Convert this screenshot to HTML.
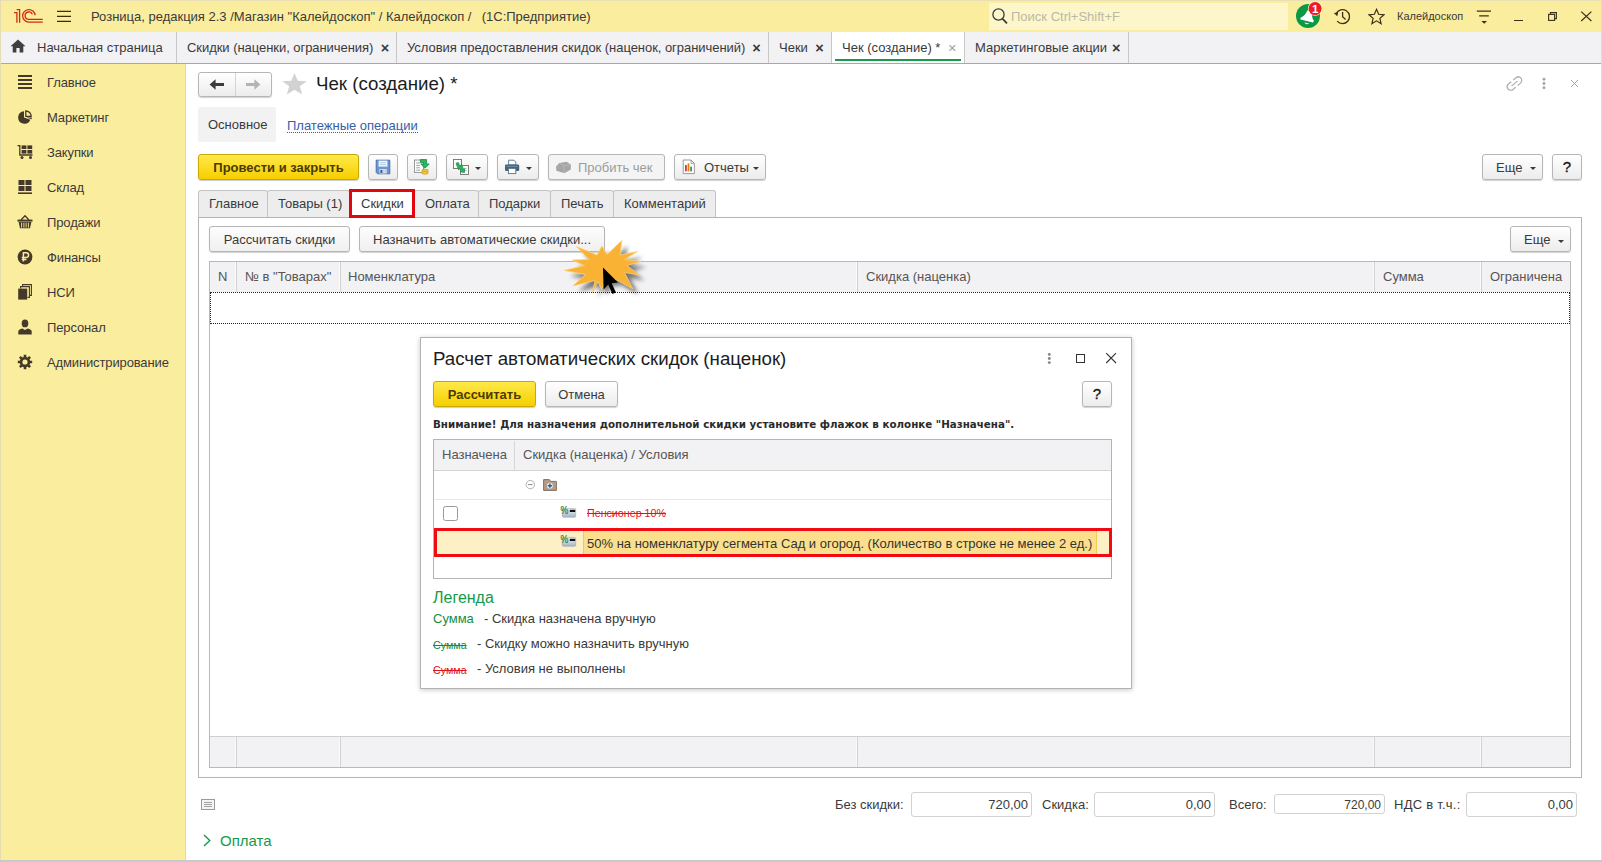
<!DOCTYPE html>
<html lang="ru">
<head>
<meta charset="utf-8">
<title>Чек (создание)</title>
<style>
*{box-sizing:border-box;margin:0;padding:0}
html,body{width:1602px;height:862px;overflow:hidden;background:#fff}
body{font-family:"Liberation Sans",sans-serif;font-size:13px;color:#3a3a3a;position:relative}
.abs{position:absolute}
.t{position:absolute;white-space:nowrap;line-height:16px}
#topbar{left:0;top:0;width:1602px;height:32px;background:#fbed9e}
#tabbar{left:0;top:32px;width:1602px;height:31px;background:#f2f1f4}
#tabline{left:0;top:63px;width:1602px;height:1px;background:#a8a8a8}
#sidebar{left:0;top:64px;width:186px;height:798px;background:#fbed9e}
.vsep{position:absolute;top:32px;width:1px;height:31px;background:#c8c8c8}
.btn{position:absolute;border:1px solid #b6b6b6;border-radius:3px;background:linear-gradient(#ffffff,#ececec);box-shadow:0 1px 1px rgba(0,0,0,.18)}
.ybtn{position:absolute;border:1px solid #c9a800;border-radius:3px;background:linear-gradient(#ffe94a,#f7cf00);box-shadow:0 1px 1px rgba(0,0,0,.2)}
.inp{position:absolute;border:1px solid #d2d2d2;border-radius:3px;background:#fff}
.side{position:absolute;left:47px;letter-spacing:-.13px;font-size:13px;color:#3a3a3a;white-space:nowrap;line-height:16px}
.t{font-size:13px}
.tx{font-size:14.5px;font-weight:bold;color:#3a3a3a;line-height:16px}
.dd{position:absolute;width:0;height:0;margin-top:1px;border-left:3.5px solid transparent;border-right:3.5px solid transparent;border-top:3.5px solid #3a3a3a}
.ftab{position:absolute;top:190px;height:28px;background:#ededed;border:1px solid #c4c4c4;border-bottom:none;border-radius:3px 3px 0 0}
.cs{position:absolute;top:262px;width:1px;height:30px;background:#d2d2d2;box-shadow:-1px 0 0 #fafafa}
.cs.b{top:737px}
.th{color:#555}
</style>
</head>
<body>
<!-- frame -->
<div class="abs" id="topbar"></div>
<div class="abs" id="tabbar"></div>
<div class="abs" id="tabline"></div>
<div class="abs" id="sidebar"></div>

<!-- TOPBAR -->
<svg class="abs" style="left:12px;top:8px" width="33" height="16" viewBox="0 0 33 16">
  <g fill="none" stroke="#cf2c12" stroke-width="1.3">
    <path d="M2 4.7 H4.9 V14.7"/>
    <path d="M4.6 1.7 H7.6 V14.7"/>
    <path d="M23.1 7.2 A6.25 6.25 0 1 0 16.9 14.05 H30.8"/>
    <path d="M20.3 6.4 A3.7 3.7 0 1 0 16.9 11.3 H30.8"/>
  </g>
</svg>
<svg class="abs" style="left:57px;top:10px" width="15" height="13" viewBox="0 0 15 13"><g stroke="#3a3000" stroke-width="1.3"><path d="M0 1.4H14M0 6.4H14M0 11.3H14"/></g></svg>
<div class="t" style="left:91px;top:9px;font-size:13px;color:#3a3a3a">Розница, редакция 2.3 /Магазин "Калейдоскоп" / Калейдоскоп /&nbsp; <span style="margin-left:3px">(1С:Предприятие)</span></div>
<div class="abs" style="left:989px;top:3px;width:299px;height:27px;background:#fdf6ca"></div>
<svg class="abs" style="left:991px;top:7px" width="18" height="18" viewBox="0 0 18 18"><circle cx="7.5" cy="7.5" r="5.6" fill="none" stroke="#3a3a3a" stroke-width="1.3"/><path d="M11.6 11.8L16 16.3" stroke="#3a3a3a" stroke-width="1.8"/></svg>
<div class="t" style="left:1011px;top:9px;font-size:13px;color:#b9b9a4">Поиск Ctrl+Shift+F</div>
<!-- bell -->
<svg class="abs" style="left:1294px;top:0px" width="30" height="30" viewBox="1294 0 30 30">
  <circle cx="1308" cy="16" r="12" fill="#0b9947"/>
  <path d="M1300.3 18 Q1305.6 15.6 1307.2 10.6 Q1311.6 11.2 1312 16 Q1312.4 19 1314 21 L1312.8 22.4 L1300.6 19.4Z" fill="#fff"/>
  <path d="M1304.4 22.4 L1309.3 23.6 Q1306.4 25.6 1304.4 22.4Z" fill="#e8fff0"/>
  <circle cx="1315.1" cy="8.6" r="7.2" fill="#fdf3c2"/>
  <circle cx="1315.1" cy="8.6" r="6.5" fill="#ee1c25"/>
  <text x="1315.2" y="12.8" font-family="Liberation Sans,Arial,sans-serif" font-size="11.5" font-weight="bold" fill="#fff" text-anchor="middle">1</text>
</svg>
<!-- history -->
<svg class="abs" style="left:1332px;top:6px" width="22" height="22" viewBox="1332 6 22 22"><path d="M1336.2 13.6 A7 7 0 1 1 1337.2 21.2" fill="none" stroke="#3a3018" stroke-width="1.3"/><path d="M1333.8 13 L1338.2 12.4 L1337.2 16.2Z" fill="#3a3018"/><path d="M1342.6 12V16.7L1345.6 19.4" fill="none" stroke="#3a3018" stroke-width="1.3"/></svg>
<!-- star -->
<svg class="abs" style="left:1368px;top:8px" width="17" height="17" viewBox="0 0 20 20"><path d="M10 1.6 L12.5 7.4 L18.8 8 L14 12.2 L15.4 18.4 L10 15.1 L4.6 18.4 L6 12.2 L1.2 8 L7.5 7.4Z" fill="none" stroke="#3a3018" stroke-width="1.4" stroke-linejoin="miter"/></svg>
<div class="t" style="left:1397px;top:8px;font-size:11px;color:#3a3a3a">Калейдоскоп</div>
<svg class="abs" style="left:1475px;top:10px" width="18" height="16" viewBox="0 0 18 16"><path d="M1.8 1.2H16M4.2 5.9H13.8" stroke="#3a3018" stroke-width="1.2"/><path d="M6.4 11 H12 L9.2 13.8Z" fill="#3a3018"/></svg>
<div class="abs" style="left:1514px;top:19.5px;width:9px;height:1.3px;background:#3a3018"></div>
<svg class="abs" style="left:1547px;top:11px" width="11" height="11" viewBox="0 0 11 11"><path d="M3.4 3.2V1.6H9.4V7.6H7.8" fill="none" stroke="#3a3018" stroke-width="1.1"/><rect x="1.6" y="3.4" width="6" height="6" fill="none" stroke="#3a3018" stroke-width="1.1"/></svg>
<svg class="abs" style="left:1580px;top:10px" width="13" height="13" viewBox="0 0 13 13"><path d="M1.2 1.6L11.4 11M11.4 1.6L1.2 11" stroke="#3a3018" stroke-width="1.2"/></svg>

<!-- TABBAR -->
<svg class="abs" style="left:10px;top:39px" width="16" height="14" viewBox="0 0 16 14"><path d="M8 0.5 L15.5 7.2 H13.3 V13.5 H9.6 V9 H6.4 V13.5 H2.7 V7.2 H0.5Z" fill="#3f3f3f"/></svg>
<div class="t" style="left:37px;top:40px">Начальная страница</div>
<div class="vsep" style="left:176px"></div>
<div class="t" style="left:187px;top:40px;letter-spacing:-.05px">Скидки (наценки, ограничения)</div>
<div class="t tx" style="left:375px;width:20px;text-align:center;top:40px">×</div>
<div class="vsep" style="left:396px"></div>
<div class="t" style="left:407px;top:40px;letter-spacing:-.05px">Условия предоставления скидок (наценок, ограничений)</div>
<div class="t tx" style="left:746.5px;width:20px;text-align:center;top:40px">×</div>
<div class="vsep" style="left:768px"></div>
<div class="t" style="left:779px;top:40px">Чеки</div>
<div class="t tx" style="left:809.4px;width:20px;text-align:center;top:40px">×</div>
<div class="vsep" style="left:831px"></div>
<div class="abs" style="left:832px;top:32px;width:132px;height:31px;background:#fff"></div>
<div class="abs" style="left:835px;top:59px;width:126px;height:2px;background:#159a4a"></div>
<div class="t" style="left:842px;top:40px">Чек (создание) *</div>
<div class="t tx" style="left:942.2px;width:20px;text-align:center;top:40px;color:#a0a0a0;font-weight:normal">×</div>
<div class="vsep" style="left:964px"></div>
<div class="t" style="left:975px;top:40px">Маркетинговые акции</div>
<div class="t tx" style="left:1106.3px;width:20px;text-align:center;top:40px">×</div>
<div class="vsep" style="left:1128px"></div>

<!-- SIDEBAR -->
<div class="side" style="top:75px">Главное</div>
<div class="side" style="top:110px">Маркетинг</div>
<div class="side" style="top:145px">Закупки</div>
<div class="side" style="top:180px">Склад</div>
<div class="side" style="top:215px">Продажи</div>
<div class="side" style="top:250px">Финансы</div>
<div class="side" style="top:285px">НСИ</div>
<div class="side" style="top:320px">Персонал</div>
<div class="side" style="top:355px">Администрирование</div>
<!-- sidebar icons -->
<svg class="abs" style="left:18px;top:74px" width="14" height="16" viewBox="0 0 14 16"><path d="M0 2H14M0 6H14M0 10H14M0 14H14" stroke="#45392a" stroke-width="2"/></svg>
<svg class="abs" style="left:17px;top:109px" width="16" height="16" viewBox="0 0 16 16"><path d="M7 2.2 A6.3 6.3 0 1 0 13.3 10.8 L7 8.5Z" fill="#45392a"/><path d="M8.8 2 A5.4 5.4 0 0 1 14.2 7.4 H8.8Z" fill="none" stroke="#45392a" stroke-width="1.3"/><path d="M9 8.6 L14.9 8.6 A6.3 6.3 0 0 1 14.6 10.2Z" fill="#45392a"/></svg>
<svg class="abs" style="left:17px;top:144px" width="17" height="16" viewBox="0 0 17 16"><path d="M0.5 1.6 H2.8 V11 H15.5" fill="none" stroke="#45392a" stroke-width="1.3"/><rect x="4.6" y="1.4" width="4.8" height="3.6" fill="#45392a"/><rect x="10.4" y="1.4" width="4.8" height="3.6" fill="#45392a"/><rect x="4.6" y="6" width="4.8" height="3.6" fill="#45392a"/><rect x="10.4" y="6" width="4.8" height="3.6" fill="#45392a"/><circle cx="5" cy="13.4" r="1.5" fill="#45392a"/><circle cx="13.5" cy="13.4" r="1.5" fill="#45392a"/></svg>
<svg class="abs" style="left:18px;top:180px" width="14" height="15" viewBox="0 0 14 15"><rect x="0.5" y="0" width="6" height="5" fill="#45392a"/><rect x="7.5" y="0" width="6" height="5" fill="#45392a"/><rect x="0.5" y="6" width="6" height="5" fill="#45392a"/><rect x="7.5" y="6" width="6" height="5" fill="#45392a"/><rect x="0" y="12.4" width="14" height="1.6" fill="#45392a"/></svg>
<svg class="abs" style="left:17px;top:214px" width="16" height="15" viewBox="0 0 16 15"><path d="M4 6 L8 1.8 L12 6" fill="none" stroke="#45392a" stroke-width="1.3"/><rect x="0.5" y="5.6" width="15" height="2" fill="#45392a"/><path d="M1.6 8 H14.4 L13 14.2 H3Z" fill="#45392a"/><path d="M4.6 8.6V13.6M6.9 8.6V13.6M9.1 8.6V13.6M11.4 8.6V13.6" stroke="#fbed9e" stroke-width="0.9"/></svg>
<svg class="abs" style="left:17px;top:249px" width="16" height="16" viewBox="0 0 16 16"><circle cx="8" cy="8" r="7.4" fill="#45392a"/><path d="M6.4 12.6V3.8H9.3 A2.3 2.3 0 0 1 9.3 8.4 H4.8M4.8 10.4H9.4" fill="none" stroke="#fbed9e" stroke-width="1.5"/></svg>
<svg class="abs" style="left:18px;top:284px" width="14" height="16" viewBox="0 0 14 16"><path d="M4.6 2.6V0.6H13.4V11.4H11.6" fill="none" stroke="#45392a" stroke-width="1.1"/><path d="M2.6 4.6V2.6H11.4V13.4H9.6" fill="none" stroke="#45392a" stroke-width="1.1"/><rect x="0.2" y="4.6" width="9" height="11" fill="#45392a"/></svg>
<svg class="abs" style="left:18px;top:319px" width="14" height="16" viewBox="0 0 14 16"><ellipse cx="7" cy="4.4" rx="3.3" ry="3.9" fill="#45392a"/><path d="M0.3 15.5 V12.4 Q0.3 10.2 4.4 9.4 L7 11 L9.6 9.4 Q13.7 10.2 13.7 12.4 V15.5Z" fill="#45392a"/></svg>
<svg class="abs" style="left:17px;top:354px" width="16" height="16" viewBox="0 0 16 16"><g stroke="#45392a" stroke-width="2.6"><path d="M8 0.8V15.2M0.8 8H15.2M2.9 2.9L13.1 13.1M13.1 2.9L2.9 13.1"/></g><circle cx="8" cy="8" r="5.3" fill="#45392a"/><circle cx="8" cy="8" r="2.6" fill="#fbed9e"/></svg>

<!--MAIN-->
<!-- nav buttons -->
<div class="btn" style="left:198px;top:72px;width:74px;height:25px"></div>
<div class="abs" style="left:235px;top:73px;width:1px;height:23px;background:#d4d4d4"></div>
<svg class="abs" style="left:209px;top:78px" width="16" height="13" viewBox="0 0 16 13"><path d="M0.6 6.5 L6.6 1.2 V5 H15 V8 H6.6 V11.8Z" fill="#3c3c3c"/></svg>
<svg class="abs" style="left:245px;top:78px" width="16" height="13" viewBox="0 0 16 13"><path d="M15.4 6.5 L9.4 1.2 V5 H1 V8 H9.4 V11.8Z" fill="#b4b4b4"/></svg>
<svg class="abs" style="left:281px;top:72px" width="27" height="24.5" viewBox="0 0 24 24" preserveAspectRatio="none"><path d="M12 1 L14.9 8.6 L23 9 L16.7 14 L18.8 22 L12 17.5 L5.2 22 L7.3 14 L1 9 L9.1 8.6Z" fill="#d2d2d2"/></svg>
<div class="t" style="left:316px;top:72px;font-size:18.7px;line-height:24px;color:#1c1c1c">Чек (создание) *</div>
<!-- right header icons -->
<svg class="abs" style="left:1504px;top:73px" width="22" height="22" viewBox="1504 73 22 22"><g transform="rotate(-40 1514.5 83.6)" fill="none" stroke="#adadad" stroke-width="1.2"><path d="M1513.2 80.1 H1509.6 A3.5 3.5 0 0 0 1509.6 87.1 H1513.2"/><path d="M1515.8 80.1 H1519.4 A3.5 3.5 0 0 1 1519.4 87.1 H1515.8"/><path d="M1510.6 83.6 H1518.4"/></g></svg>
<svg class="abs" style="left:1542px;top:77px" width="4" height="14" viewBox="0 0 4 14"><circle cx="2" cy="2.3" r="1.45" fill="#a6a6a6"/><circle cx="2" cy="6.5" r="1.45" fill="#a6a6a6"/><circle cx="2" cy="10.7" r="1.45" fill="#a6a6a6"/></svg>
<svg class="abs" style="left:1570px;top:79px" width="9" height="9" viewBox="0 0 9 9"><path d="M1 1L8 8M8 1L1 8" stroke="#a0a0a0" stroke-width="1"/></svg>

<div class="abs" style="left:198px;top:107px;width:78px;height:35px;background:#f2f2f2;border-radius:2px"></div>
<div class="t" style="left:208px;top:117px">Основное</div>
<div class="t" style="left:287px;color:#3560a8;border-bottom:1px dotted #3560a8;line-height:13px;top:119px">Платежные операции</div>

<!-- toolbar -->
<div class="ybtn" style="left:198px;top:154px;width:161px;height:26px"></div>
<div class="t" style="left:198px;top:160px;width:161px;text-align:center;font-weight:bold;color:#4b3a00">Провести и закрыть</div>
<div class="btn" style="left:368px;top:154px;width:30px;height:26px"></div>
<div class="btn" style="left:407px;top:154px;width:30px;height:26px"></div>
<div class="btn" style="left:446px;top:154px;width:42px;height:26px"></div>
<div class="btn" style="left:497px;top:154px;width:42px;height:26px"></div>
<div class="btn" style="left:548px;top:154px;width:117px;height:26px;background:#f4f4f4"></div>
<div class="t" style="left:578px;top:160px;color:#9c9c9c">Пробить чек</div>
<div class="btn" style="left:674px;top:154px;width:92px;height:26px"></div>
<div class="t" style="left:704px;top:160px">Отчеты</div>
<div class="dd" style="left:475px;top:166px"></div>
<div class="dd" style="left:526px;top:166px"></div>
<div class="dd" style="left:753px;top:166px"></div>
<div class="btn" style="left:1482px;top:154px;width:61px;height:26px"></div>
<div class="t" style="left:1496px;top:160px">Еще</div>
<div class="dd" style="left:1530px;top:166px"></div>
<div class="btn" style="left:1552px;top:154px;width:30px;height:26px"></div>
<div class="t" style="left:1552px;top:159px;width:30px;text-align:center;font-size:15px;color:#111;-webkit-text-stroke:.3px #111">?</div>
<!-- toolbar icons -->
<svg class="abs" style="left:375px;top:159px" width="16" height="16" viewBox="0 0 16 16"><path d="M1.2 1.2 H14.8 V14.8 H2.6 L1.2 13.4Z" fill="#6b97d2" stroke="#3f68a6" stroke-width="0.9"/><rect x="3.6" y="1.6" width="8.8" height="6" fill="#f3f6fb"/><path d="M4.8 3.6H11.2M4.8 5.6H11.2" stroke="#a9bcd8" stroke-width="0.8"/><rect x="4.4" y="10" width="7.4" height="4.6" fill="#cfd6e2"/><rect x="5.4" y="11" width="2" height="3" fill="#3f5f96"/></svg>
<svg class="abs" style="left:413px;top:158px" width="18" height="18" viewBox="0 0 18 18"><rect x="1.5" y="2" width="9" height="12.4" fill="#fdfdfd" stroke="#8f8f8f" stroke-width="0.9"/><path d="M3.2 5H7M3.2 7.4H7M3.2 9.8H7M3.2 12.2H7" stroke="#9a9a9a" stroke-width="0.9"/><path d="M7.4 1.6 H13.6 V6 H16.2 L12 10.2 L7.8 6 H10.4 V4.6 H7.4Z" fill="#2fb466" stroke="#168a44" stroke-width="0.8"/><path d="M9 11.6 H15 V15.6 Q12 17 9 15.6Z" fill="#f4cf3c" stroke="#c79a12" stroke-width="0.7"/><path d="M9.4 13.6H14.6" stroke="#c79a12" stroke-width="0.7"/></svg>
<svg class="abs" style="left:452px;top:158px" width="18" height="18" viewBox="0 0 18 18"><rect x="1.5" y="1.5" width="8" height="9" fill="#fbfbfb" stroke="#6f6f6f" stroke-width="0.9"/><rect x="8.5" y="7.5" width="8" height="9" fill="#fbfbfb" stroke="#6f6f6f" stroke-width="0.9"/><path d="M10.4 10.4H14.6M10.4 12.6H14.6" stroke="#aaa" stroke-width="0.7"/><path d="M4 5.2 L6.4 4.6 L8 8.6 L9.6 6.2 L11.6 11.8 L12.8 10.6 L12.4 14.6 L8.2 13.8 L9.6 13 L7.6 10.4 L6.6 12 Z" fill="#2fb466" stroke="#168a44" stroke-width="0.7"/></svg>
<svg class="abs" style="left:504px;top:159px" width="17" height="16" viewBox="0 0 17 16"><path d="M4.6 1.2 H10 L11.8 3 V6 H4.6Z" fill="#fff" stroke="#5a7488" stroke-width="0.9"/><rect x="1" y="5.6" width="14.2" height="6.4" rx="1.2" fill="#44647e"/><path d="M2.6 7.4H13.6" stroke="#7f9bb2" stroke-width="0.8"/><rect x="4.4" y="9.4" width="7.4" height="5.2" fill="#fff" stroke="#5a7488" stroke-width="0.9"/></svg>
<svg class="abs" style="left:555px;top:161px" width="17" height="13" viewBox="0 0 17 13"><path d="M1 5.4 L4.4 2 L11.6 0.8 L15.8 3.6 V8.6 L9.4 12.2 L1.4 9.8Z" fill="#a6a6a6"/><path d="M4.4 2 L8.6 4.8 L15.8 3.6M8.6 4.8 L9.2 12" fill="none" stroke="#c2c2c2" stroke-width="0.6"/></svg>
<svg class="abs" style="left:682px;top:159px" width="14" height="16" viewBox="0 0 14 16"><path d="M1.2 1 H9 L12.4 4.4 V14.6 H1.2Z" fill="#fff" stroke="#8e8e8e" stroke-width="0.9"/><path d="M9 1 V4.4 H12.4" fill="none" stroke="#8e8e8e" stroke-width="0.8"/><rect x="3" y="6" width="1.8" height="6.4" fill="#d8382c"/><rect x="5.6" y="4.4" width="1.8" height="8" fill="#e07a1e"/><rect x="8.2" y="7.6" width="1.8" height="4.8" fill="#3f9a48"/></svg>

<!-- form tabs -->
<div class="ftab" style="left:198px;width:70px"></div>
<div class="ftab" style="left:267px;width:83px"></div>
<div class="ftab" style="left:414px;width:65px"></div>
<div class="ftab" style="left:478px;width:73px"></div>
<div class="ftab" style="left:550px;width:64px"></div>
<div class="ftab" style="left:613px;width:103px"></div>
<div class="t" style="left:209px;top:196px">Главное</div>
<div class="t" style="left:278px;top:196px">Товары (1)</div>
<div class="t" style="left:425px;top:196px">Оплата</div>
<div class="t" style="left:489px;top:196px">Подарки</div>
<div class="t" style="left:561px;top:196px">Печать</div>
<div class="t" style="left:624px;top:196px">Комментарий</div>
<!-- panel -->
<div class="abs" style="left:198px;top:217px;width:1384px;height:561px;border:1px solid #b4b4b4;background:#fff"></div>
<div class="abs" style="left:349px;top:189px;width:66px;height:29px;border:3px solid #e4060e;background:#fff"></div>
<div class="t" style="left:361px;top:196px">Скидки</div>

<div class="btn" style="left:209px;top:226px;width:141px;height:26px;background:linear-gradient(#fdfdfd,#f0f0f0)"></div>
<div class="t" style="left:209px;top:232px;width:141px;text-align:center">Рассчитать скидки</div>
<div class="btn" style="left:359px;top:226px;width:246px;height:26px;background:linear-gradient(#fdfdfd,#f0f0f0)"></div>
<div class="t" style="left:373px;top:232px">Назначить автоматические скидки...</div>
<div class="btn" style="left:1510px;top:226px;width:61px;height:26px"></div>
<div class="t" style="left:1524px;top:232px">Еще</div>
<div class="dd" style="left:1558px;top:239px"></div>

<!-- table -->
<div class="abs" style="left:209px;top:261px;width:1362px;height:507px;border:1px solid #b8b8b8;background:#fff"></div>
<div class="abs" style="left:210px;top:262px;width:1360px;height:30px;background:#f2f1f4"></div>
<div class="abs" style="left:210px;top:736px;width:1360px;height:31px;background:#f2f1f4;border-top:1px solid #cfcfcf"></div>
<div class="cs" style="left:236px"></div><div class="cs" style="left:340px"></div><div class="cs" style="left:857px"></div><div class="cs" style="left:1374px"></div><div class="cs" style="left:1481px"></div>
<div class="cs b" style="left:236px"></div><div class="cs b" style="left:340px"></div><div class="cs b" style="left:857px"></div><div class="cs b" style="left:1374px"></div><div class="cs b" style="left:1481px"></div>
<div class="t th" style="left:218px;top:269px">N</div>
<div class="t th" style="left:245px;top:269px">№ в "Товарах"</div>
<div class="t th" style="left:348px;top:269px">Номенклатура</div>
<div class="t th" style="left:866px;top:269px">Скидка (наценка)</div>
<div class="t th" style="left:1383px;top:269px">Сумма</div>
<div class="t th" style="left:1490px;top:269px">Ограничена</div>
<div class="abs" style="left:210px;top:292px;width:1360px;height:32px;border:1px dotted #222"></div>

<!-- bottom totals -->
<svg class="abs" style="left:201px;top:799px" width="14" height="12" viewBox="0 0 14 12"><rect x="0.5" y="0.5" width="13" height="10" fill="#f4f4f4" stroke="#9a9a9a"/><path d="M3 3.5H11M3 5.5H11M3 7.5H11" stroke="#9a9a9a" stroke-width="0.9"/></svg>
<div class="t" style="left:835px;top:797px">Без скидки:</div>
<div class="inp" style="left:911px;top:792px;width:121px;height:25px"></div>
<div class="t" style="left:911px;top:797px;width:117px;text-align:right">720,00</div>
<div class="t" style="left:1042px;top:797px">Скидка:</div>
<div class="inp" style="left:1094px;top:792px;width:121px;height:25px"></div>
<div class="t" style="left:1094px;top:797px;width:117px;text-align:right">0,00</div>
<div class="t" style="left:1229px;top:797px">Всего:</div>
<div class="inp" style="left:1274px;top:794px;width:111px;height:20px"></div>
<div class="t" style="left:1274px;top:797px;width:107px;text-align:right;font-size:12px">720,00</div>
<div class="t" style="left:1394px;top:797px;letter-spacing:.25px">НДС в т.ч.:</div>
<div class="inp" style="left:1466px;top:792px;width:111px;height:25px"></div>
<div class="t" style="left:1466px;top:797px;width:107px;text-align:right">0,00</div>
<svg class="abs" style="left:203px;top:834px" width="9" height="13" viewBox="0 0 9 13"><path d="M1 1L6.8 6.5L1 12" fill="none" stroke="#159a4a" stroke-width="1.4"/></svg>
<div class="t" style="left:220px;top:831px;font-size:15px;line-height:20px;color:#159a4a">Оплата</div>

<!-- frame borders -->
<div class="abs" style="left:0;top:0;width:1602px;height:1px;background:#e8dfb4"></div>
<div class="abs" style="left:0;top:0;width:1px;height:862px;background:#e6dcb2"></div>
<div class="abs" style="left:1601px;top:0;width:1px;height:862px;background:#dcdcdc"></div>
<div class="abs" style="left:0;top:860px;width:1602px;height:2px;background:#c9c9c9"></div>
<div class="abs" style="left:185px;top:64px;width:1px;height:796px;background:#e6da94"></div>
<!--DIALOG-->
<div class="abs" style="left:420px;top:337px;width:712px;height:352px;background:#fff;border:1px solid #b2b2b2;box-shadow:0 1px 5px rgba(0,0,0,.22)"></div>
<div class="t" style="left:433px;top:347px;font-size:18.7px;line-height:24px;color:#1c1c1c">Расчет автоматических скидок (наценок)</div>
<svg class="abs" style="left:1047px;top:352px" width="5" height="13" viewBox="0 0 5 13"><circle cx="2.3" cy="2.4" r="1.45" fill="#858585"/><circle cx="2.3" cy="6.5" r="1.45" fill="#858585"/><circle cx="2.3" cy="10.6" r="1.45" fill="#858585"/></svg>
<div class="abs" style="left:1076px;top:354px;width:9px;height:9px;border:1.3px solid #333"></div>
<svg class="abs" style="left:1104px;top:352px" width="13" height="13" viewBox="0 0 13 13"><path d="M2.2 1.2L12 11M12 1.2L2.2 11" stroke="#333" stroke-width="1.1"/></svg>
<div class="ybtn" style="left:433px;top:381px;width:103px;height:26px"></div>
<div class="t" style="left:433px;top:387px;width:103px;text-align:center;font-weight:bold;color:#4b3a00">Рассчитать</div>
<div class="btn" style="left:545px;top:381px;width:73px;height:26px"></div>
<div class="t" style="left:545px;top:387px;width:73px;text-align:center">Отмена</div>
<div class="btn" style="left:1082px;top:381px;width:30px;height:26px"></div>
<div class="t" style="left:1082px;top:386px;width:30px;text-align:center;font-size:15px;color:#111;-webkit-text-stroke:.3px #111">?</div>
<div class="t" id="warn" style="left:433px;top:416px;font-family:'DejaVu Sans','Liberation Sans',sans-serif;font-size:10.3px;font-weight:bold;color:#2a2a2a">Внимание! Для назначения дополнительной скидки установите флажок в колонке "Назначена".</div>
<!-- dialog table -->
<div class="abs" style="left:433px;top:439px;width:679px;height:140px;border:1px solid #b4b4b4;background:#fff"></div>
<div class="abs" style="left:434px;top:440px;width:677px;height:31px;background:#f2f1f3;border-bottom:1px solid #d4d4d4"></div>
<div class="abs" style="left:514px;top:441px;width:1px;height:29px;background:#d6d6d6"></div>
<div class="t th" style="left:442px;top:447px">Назначена</div>
<div class="t th" style="left:523px;top:447px">Скидка (наценка) / Условия</div>
<div class="abs" style="left:434px;top:499px;width:677px;height:1px;background:#e6e6e6"></div>
<!-- row1 -->
<svg class="abs" style="left:524px;top:478px" width="13" height="13" viewBox="524 478 13 13"><circle cx="530.3" cy="484.6" r="4.2" fill="#fff" stroke="#b0b0b0" stroke-width="1"/><path d="M528 484.6H532.6" stroke="#888" stroke-width="1"/></svg>
<svg class="abs" style="left:542px;top:478px" width="16" height="14" viewBox="542 478 16 14"><path d="M543.6 479.6 H549.4 L550.6 481.4 H556.4 V490.4 H543.6Z" fill="#b59c88" stroke="#7d6552" stroke-width="0.9" stroke-linejoin="round"/><circle cx="549.9" cy="485.7" r="2.9" fill="#e4ebf4"/><path d="M549.9 483.6V487.8M547.8 485.7H552" stroke="#2a6496" stroke-width="1.5"/></svg>
<!-- row2 -->
<div class="abs" style="left:443px;top:506px;width:15px;height:15px;border:1px solid #9a9a9a;border-radius:2.5px;background:#fff"></div>
<svg class="abs" style="left:560px;top:504px" width="18" height="15" viewBox="560 504 18 15"><defs><linearGradient id="cg0" x1="0" y1="0" x2="0" y2="1"><stop offset="0" stop-color="#eef2f6"/><stop offset="1" stop-color="#a9b4c2"/></linearGradient></defs><rect x="562.3" y="508.4" width="13.4" height="8.8" rx="1" fill="url(#cg0)" stroke="#9aa4b0" stroke-width="0.6"/><rect x="569.8" y="509.8" width="5.4" height="2.2" fill="#111"/><text x="560.4" y="513.8" font-family="Liberation Sans,Arial,sans-serif" font-size="11" textLength="7.8" lengthAdjust="spacingAndGlyphs" fill="#2a7a2a" stroke="#2a7a2a" stroke-width="0.2">%</text></svg>
<div class="t" id="pens" style="left:587px;top:505px;font-size:10.7px;color:#e0141e;text-decoration:line-through">Пенсионер 10%</div>
<!-- row3 -->
<div class="abs" style="left:434px;top:529px;width:677px;height:28px;background:#fdf0c4"></div>
<div class="abs" style="left:583px;top:529px;width:514px;height:28px;background:#fbdf8c;border-left:1.5px solid #f0cb58;border-right:1.5px solid #f0cb58"></div>
<svg class="abs" style="left:560px;top:533px" width="18" height="15" viewBox="560 504 18 15"><defs><linearGradient id="cg29" x1="0" y1="0" x2="0" y2="1"><stop offset="0" stop-color="#eef2f6"/><stop offset="1" stop-color="#a9b4c2"/></linearGradient></defs><rect x="562.3" y="508.4" width="13.4" height="8.8" rx="1" fill="url(#cg29)" stroke="#9aa4b0" stroke-width="0.6"/><rect x="569.8" y="509.8" width="5.4" height="2.2" fill="#111"/><text x="560.4" y="513.8" font-family="Liberation Sans,Arial,sans-serif" font-size="11" textLength="7.8" lengthAdjust="spacingAndGlyphs" fill="#2a7a2a" stroke="#2a7a2a" stroke-width="0.2">%</text></svg>
<div class="t" id="r3" style="left:587px;top:536px;color:#333">50% на номенклатуру сегмента Сад и огород. (Количество в строке не менее 2 ед.)</div>
<div class="abs" style="left:433.5px;top:528px;width:678px;height:29px;border:3px solid #f00a12"></div>
<!-- legend -->
<div class="t" style="left:433px;top:588px;font-size:16px;line-height:20px;color:#159a4a">Легенда</div>
<div class="t" style="left:433px;top:611px;color:#228b3c">Сумма</div>
<div class="t" style="left:484px;top:611px">- Скидка назначена вручную</div>
<div class="t" style="left:433px;top:637px;font-size:10.7px;color:#1a8a3a;text-decoration:line-through">Сумма</div>
<div class="t" style="left:477px;top:636px">- Скидку можно назначить вручную</div>
<div class="t" style="left:433px;top:662px;font-size:10.7px;color:#e0141e;text-decoration:line-through">Сумма</div>
<div class="t" style="left:477px;top:661px">- Условия не выполнены</div>

<!--CURSOR-->
<svg class="abs" style="left:550px;top:228px;overflow:visible" width="110" height="85" viewBox="550 228 110 85">
  <defs><filter id="sh" x="-30%" y="-30%" width="170%" height="170%"><feGaussianBlur stdDeviation="2.2"/></filter></defs>
  <g id="burst">
  <polygon transform="translate(5.5,5.5)" filter="url(#sh)" fill="#000" opacity=".5" points="621.9,240.5 620,255 637.4,251.5 624.5,259.5 640.9,261.5 627,265.5 638.9,274.9 624.5,272.5 632.9,288.9 615.9,279.5 606,281 601.5,289.5 598,281.5 592.4,292.9 595,280.5 572.9,285.9 585.5,274.5 564.4,270.4 584.5,265.5 572.4,260 589,259.5 576.4,246.5 597,255 601.9,246 607,254.5"/>
  <polygon fill="#f9b233" stroke="#fbd27a" stroke-width="0.8" points="621.9,240.5 620,255 637.4,251.5 624.5,259.5 640.9,261.5 627,265.5 638.9,274.9 624.5,272.5 632.9,288.9 615.9,279.5 606,281 601.5,289.5 598,281.5 592.4,292.9 595,280.5 572.9,285.9 585.5,274.5 564.4,270.4 584.5,265.5 572.4,260 589,259.5 576.4,246.5 597,255 601.9,246 607,254.5"/>
  <path d="M603 267.5 L603.6 289.5 L608.2 284.6 L612.4 294 L616 292.4 L611.6 283.2 L618 282.6Z" fill="#000"/>
  </g>
</svg>
</body>
</html>
